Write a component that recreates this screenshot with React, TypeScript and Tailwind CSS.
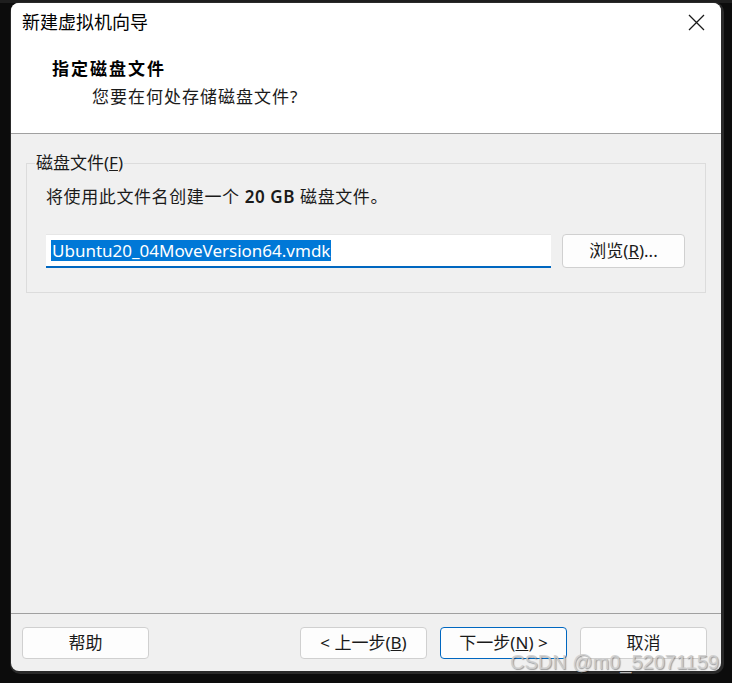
import React from "react";

const F = "'Noto Sans','Noto Sans CJK SC',sans-serif";

function Btn({ children, primary = false, className = "w-[127px] h-[32px]" }: { children: React.ReactNode; primary?: boolean; className?: string }) {
  return (
    <div
      className={`flex items-center justify-center rounded-[4px] bg-[#fdfdfd] text-[17px] text-[#1a1a1a] border ${primary ? "border-[#0067c0]" : "border-[#d0d0d0]"} ${className}`}
    >
      {children}
    </div>
  );
}

export default function App() {
  return (
    <div className="relative w-[732px] h-[683px] bg-[#0c0c0c] overflow-hidden" style={{ fontFamily: F }}>
      <div className="h-[3px] bg-[#1e1e1e]" />
      <div className="ml-[11px] w-[710px] h-[668px] rounded-[8px] overflow-hidden flex flex-col bg-[#f0f0f0] shadow-[1px_1px_0_2px_#2a2a2a]">
        {/* header */}
        <div className="relative h-[131px] bg-white border-b border-[#a0a0a0] shrink-0">
          <div className="absolute left-[11px] top-[7px] text-[18px] leading-[24px] text-black">新建虚拟机向导</div>
          <svg className="absolute left-[677px] top-[11px]" width="17" height="17" viewBox="0 0 17 17">
            <path d="M1 1 L16 16 M16 1 L1 16" stroke="#1a1a1a" strokeWidth="1.3" />
          </svg>
          <div className="absolute left-[41px] top-[54px] text-[17px] leading-[24px] font-bold text-black tracking-[2px]">指定磁盘文件</div>
          <div className="absolute left-[81px] top-[82px] text-[17px] leading-[24px] text-[#1a1a1a] tracking-[1px]">您要在何处存储磁盘文件?</div>
        </div>
        {/* body */}
        <div className="flex-1 px-[15px] pt-[29px]">
          <div className="relative border border-[#dcdcdc] h-[130px] w-[680px] pt-[21px] pl-[19px]">
            <div className="absolute left-[8px] top-[-13px] bg-[#f0f0f0] px-[1px] text-[17px] leading-[24px] text-[#1a1a1a]">
              磁盘文件(<span className="underline">F</span>)
            </div>
            <div className="text-[17px] leading-[24px] text-[#1a1a1a] tracking-[0.6px]">
              将使用此文件名创建一个 <span className="font-semibold">20 GB</span> 磁盘文件。
            </div>
            <div className="flex items-center mt-[25px] gap-[11px]">
              <div className="w-[505px] h-[34px] bg-white border-t border-[#e6e6e6] border-b-2 border-b-[#0067c0] flex items-center pl-[5px]">
                <span className="bg-[#0078d7] text-white text-[17px] leading-[21px] px-[1px]">Ubuntu20_04MoveVersion64.vmdk</span>
              </div>
              <Btn className="w-[123px] h-[34px]">
                浏览(<span className="underline">R</span>)...
              </Btn>
            </div>
          </div>
        </div>
        {/* footer */}
        <div className="h-[58px] shrink-0 border-t border-[#a0a0a0] flex items-start pt-[13px] pl-[11px]">
          <Btn>帮助</Btn>
          <Btn className="w-[127px] h-[32px] ml-[151px]">
            &lt; 上一步(<span className="underline">B</span>)
          </Btn>
          <Btn primary className="w-[127px] h-[32px] ml-[13px]">
            下一步(<span className="underline">N</span>) &gt;
          </Btn>
          <Btn className="w-[127px] h-[32px] ml-[13px]">取消</Btn>
        </div>
      </div>
      <div
        className="absolute left-[510px] top-[651px] text-[20px] leading-[22px] text-[#cfcfcf]/90"
        style={{ fontFamily: "'Liberation Sans',sans-serif", textShadow: "1px 1px 1px rgba(0,0,0,0.35)" }}
      >
        CSDN @m0_52071159
      </div>
    </div>
  );
}
